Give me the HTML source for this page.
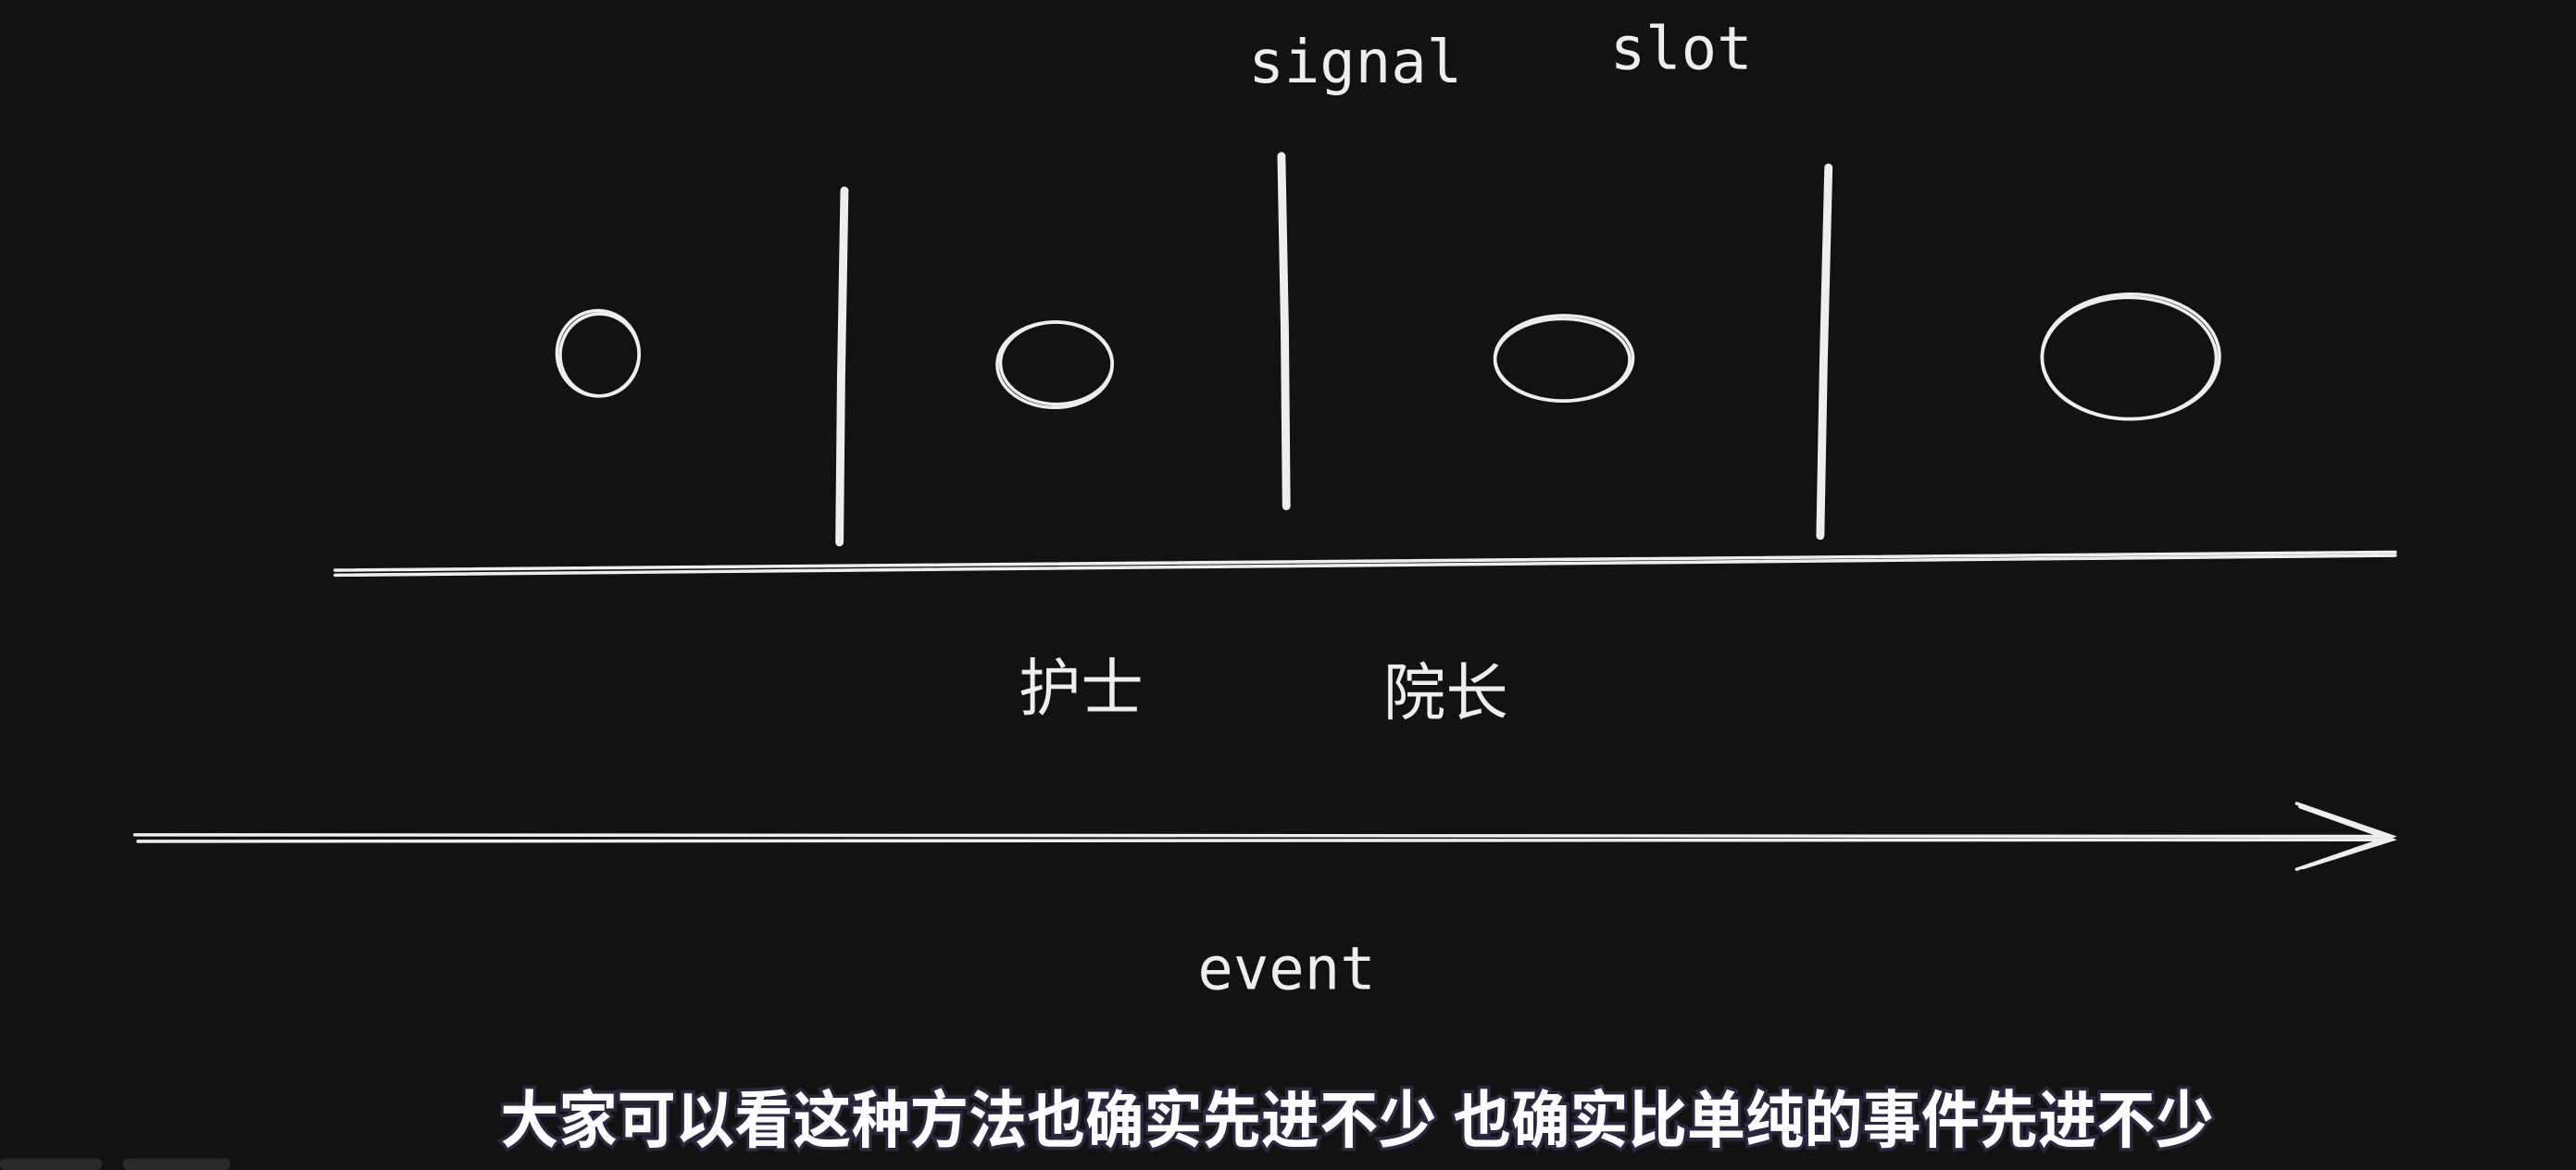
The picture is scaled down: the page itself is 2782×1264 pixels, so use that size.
<!DOCTYPE html>
<html><head><meta charset="utf-8"><style>
html,body{margin:0;padding:0;background:#121212;width:2782px;height:1264px;overflow:hidden}
svg{display:block}
</style></head><body>
<svg width="2782" height="1264" viewBox="0 0 1568 712" preserveAspectRatio="none" xmlns="http://www.w3.org/2000/svg">
<rect width="1568" height="712" fill="#121212"/>
<g fill="#eeeeee" font-family="DejaVu Sans Mono, Liberation Mono, monospace" font-size="36">
<text x="760" y="50">signal</text>
<text x="980" y="42">slot</text>
<text x="729" y="602">event</text>
</g>
<g fill="#eeeeee" font-family="Liberation Sans, Noto Sans CJK SC, sans-serif" font-size="38">
<text x="620" y="432">护士</text>
<text x="842" y="435">院长</text>
</g>
<g stroke="#eeeeee" fill="none" stroke-linecap="round">
<path d="M514 116 L512 230 L511 330" stroke-width="5"/>
<path d="M780 95 L782 200 L783 308" stroke-width="5"/>
<path d="M1113 102 L1110 220 L1108 326" stroke-width="5"/>
<g stroke-width="2">
<ellipse cx="364" cy="215" rx="25" ry="26"/>
<ellipse cx="365" cy="216" rx="24" ry="25"/>
<ellipse cx="642" cy="222" rx="35" ry="26"/>
<ellipse cx="643" cy="221" rx="34" ry="25"/>
<ellipse cx="952" cy="218" rx="42" ry="26"/>
<ellipse cx="951" cy="219" rx="41" ry="25"/>
<ellipse cx="1297" cy="217" rx="54" ry="38"/>
<ellipse cx="1296" cy="218" rx="53" ry="37"/>
<path d="M204 347 L1458 336"/>
<path d="M204 350 L1458 338"/>
<path d="M82 508 L1456 509"/>
<path d="M84 512 L1456 511"/>
<path d="M1398 489 L1456 509 L1398 529"/>
<path d="M1400 491 L1456 511 L1402 528"/>
</g>
</g>
<text x="826" y="695" text-anchor="middle" textLength="1043" lengthAdjust="spacingAndGlyphs" font-family="Liberation Sans, Noto Sans CJK SC, sans-serif" font-weight="bold" font-size="38" fill="#ffffff" stroke="#2a2840" stroke-width="4" paint-order="stroke">大家可以看这种方法也确实先进不少 也确实比单纯的事件先进不少</text>
<rect x="0" y="705" width="62" height="7" rx="3" fill="#2a2a2a"/>
<rect x="75" y="705" width="65" height="7" rx="3" fill="#2a2a2a"/>
</svg>
</body></html>
